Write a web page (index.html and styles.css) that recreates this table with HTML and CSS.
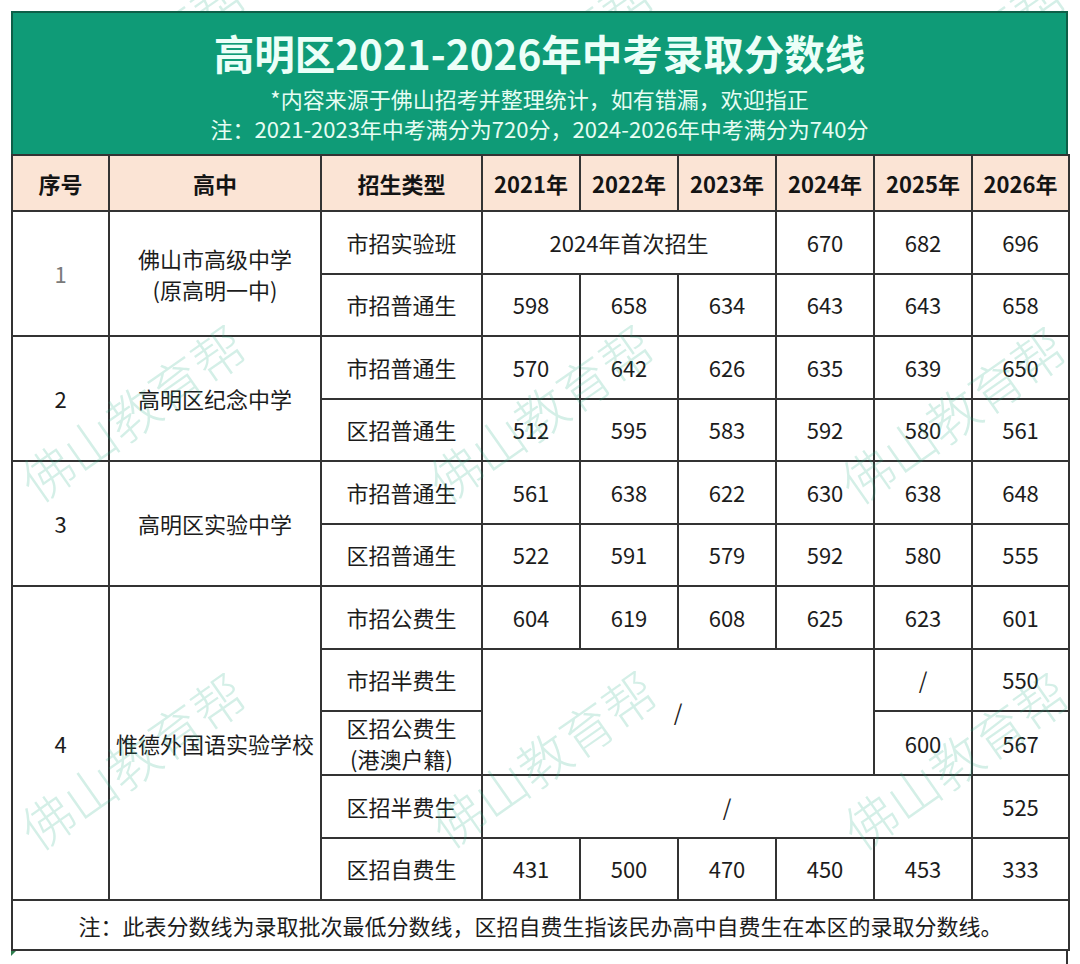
FILE: index.html
```html
<!DOCTYPE html>
<html lang="zh-CN">
<head>
<meta charset="utf-8">
<title>高明区2021-2026年中考录取分数线</title>
<link rel="stylesheet" href="styles.css">
</head>
<body>
<div class="page">
  <div class="sheet">
    <header class="banner">
      <h1>高明区2021-2026年中考录取分数线</h1>
      <p>*内容来源于佛山招考并整理统计，如有错漏，欢迎指正</p>
      <p>注：2021-2023年中考满分为720分，2024-2026年中考满分为740分</p>
    </header>
    <table class="scores">
      <colgroup>
        <col class="c-no"><col class="c-school"><col class="c-type">
        <col class="c-year"><col class="c-year"><col class="c-year"><col class="c-year"><col class="c-year"><col class="c-last">
      </colgroup>
      <thead>
        <tr>
          <th>序号</th><th>高中</th><th>招生类型</th>
          <th>2021年</th><th>2022年</th><th>2023年</th><th>2024年</th><th>2025年</th><th>2026年</th>
        </tr>
      </thead>
      <tbody>
        <tr>
          <td rowspan="2" class="muted">1</td>
          <td rowspan="2" class="two">佛山市高级中学<br>(原高明一中)</td>
          <td>市招实验班</td>
          <td colspan="3">2024年首次招生</td>
          <td>670</td><td>682</td><td>696</td>
        </tr>
        <tr>
          <td>市招普通生</td>
          <td>598</td><td>658</td><td>634</td><td>643</td><td>643</td><td>658</td>
        </tr>
        <tr>
          <td rowspan="2">2</td>
          <td rowspan="2">高明区纪念中学</td>
          <td>市招普通生</td>
          <td>570</td><td>642</td><td>626</td><td>635</td><td>639</td><td>650</td>
        </tr>
        <tr>
          <td>区招普通生</td>
          <td>512</td><td>595</td><td>583</td><td>592</td><td>580</td><td>561</td>
        </tr>
        <tr>
          <td rowspan="2">3</td>
          <td rowspan="2">高明区实验中学</td>
          <td>市招普通生</td>
          <td>561</td><td>638</td><td>622</td><td>630</td><td>638</td><td>648</td>
        </tr>
        <tr>
          <td>区招普通生</td>
          <td>522</td><td>591</td><td>579</td><td>592</td><td>580</td><td>555</td>
        </tr>
        <tr>
          <td rowspan="5">4</td>
          <td rowspan="5">惟德外国语实验学校</td>
          <td>市招公费生</td>
          <td>604</td><td>619</td><td>608</td><td>625</td><td>623</td><td>601</td>
        </tr>
        <tr>
          <td>市招半费生</td>
          <td colspan="4" rowspan="2">/</td>
          <td>/</td><td>550</td>
        </tr>
        <tr>
          <td class="two">区招公费生<br>(港澳户籍)</td>
          <td>600</td><td>567</td>
        </tr>
        <tr>
          <td>区招半费生</td>
          <td colspan="5">/</td>
          <td>525</td>
        </tr>
        <tr>
          <td>区招自费生</td>
          <td>431</td><td>500</td><td>470</td><td>450</td><td>453</td><td>333</td>
        </tr>
      </tbody>
      <tfoot>
        <tr>
          <td colspan="9" class="note">注：此表分数线为录取批次最低分数线，区招自费生指该民办高中自费生在本区的录取分数线。</td>
        </tr>
      </tfoot>
    </table>
    <div class="tail"><span class="corner"></span></div>
  </div>
  <div class="marks" aria-hidden="true">
    <span class="mark m1">佛山教育帮</span>
    <span class="mark m2">佛山教育帮</span>
    <span class="mark m3">佛山教育帮</span>
    <span class="mark m4">佛山教育帮</span>
    <span class="mark m5">佛山教育帮</span>
    <span class="mark m6">佛山教育帮</span>
    <span class="mark m7">佛山教育帮</span>
    <span class="mark m8">佛山教育帮</span>
    <span class="mark m9">佛山教育帮</span>
  </div>
</div>
</body>
</html>
```

FILE: styles.css
```css
html, body {
  margin: 0;
  padding: 0;
  background: #ffffff;
}

body {
  font-family: "Noto Sans CJK SC", "Noto Sans", "Liberation Sans", sans-serif;
  color: #1c1c1c;
}

.page {
  position: relative;
  width: 1080px;
  height: 964px;
  overflow: hidden;
}

.sheet {
  margin-left: 11px;
  padding-top: 11px;
  width: 1057px;
}

.banner {
  position: relative;
  z-index: 3;
  height: 143px;
  box-sizing: border-box;
  background: #0f9b77;
  border: 2px solid #0d5f48;
  border-bottom: none;
  text-align: center;
  color: #e6fdf3;
  padding-top: 13px;
}

.banner h1 {
  margin: 0 0 3px;
  font-size: 40.5px;
  line-height: 54px;
  font-weight: 700;
  color: #ecfff8;
}

.banner p {
  margin: 0;
  font-size: 22px;
  line-height: 30px;
  font-weight: 400;
}

.scores {
  width: 1057px;
  table-layout: fixed;
  border-collapse: collapse;
}

.c-no { width: 97px; }
.c-school { width: 212px; }
.c-type { width: 161px; }
.c-year { width: 98px; }
.c-last { width: 97px; }

.scores th,
.scores td {
  border: 2px solid #333333;
  padding: 0;
  text-align: center;
  vertical-align: middle;
}

.scores th {
  height: 54px;
  background: #fbe4d5;
  font-size: 22px;
  font-weight: 700;
  color: #141414;
}

.scores tbody tr {
  height: 62.5px;
}

.scores td {
  font-size: 22px;
  line-height: 31px;
  font-weight: 400;
  color: #1c1c1c;
}

.scores td.muted {
  color: #7a7a7a;
}

.scores tfoot td.note {
  height: 48px;
  font-size: 22px;
}

.tail {
  position: relative;
  height: 14px;
  border-right: 2px solid #333333;
}

.corner {
  position: absolute;
  left: 0;
  top: 0;
  width: 0;
  height: 0;
  border-top: 5px solid #2e7d4e;
  border-right: 5px solid transparent;
}

.marks {
  position: absolute;
  inset: 0;
  z-index: 2;
  pointer-events: none;
}

.mark {
  position: absolute;
  transform: translate(-50%, -50%) rotate(-35deg);
  font-size: 52px;
  line-height: 1;
  font-weight: 300;
  white-space: nowrap;
  color: rgba(40, 175, 135, 0.2);
}

.m1 { left: 132px; top: 62px; }
.m2 { left: 540px; top: 62px; }
.m3 { left: 952px; top: 62px; }
.m4 { left: 132px; top: 412px; }
.m5 { left: 540px; top: 412px; }
.m6 { left: 952px; top: 414px; }
.m7 { left: 132px; top: 760px; }
.m8 { left: 543px; top: 758px; }
.m9 { left: 955px; top: 760px; }
```
